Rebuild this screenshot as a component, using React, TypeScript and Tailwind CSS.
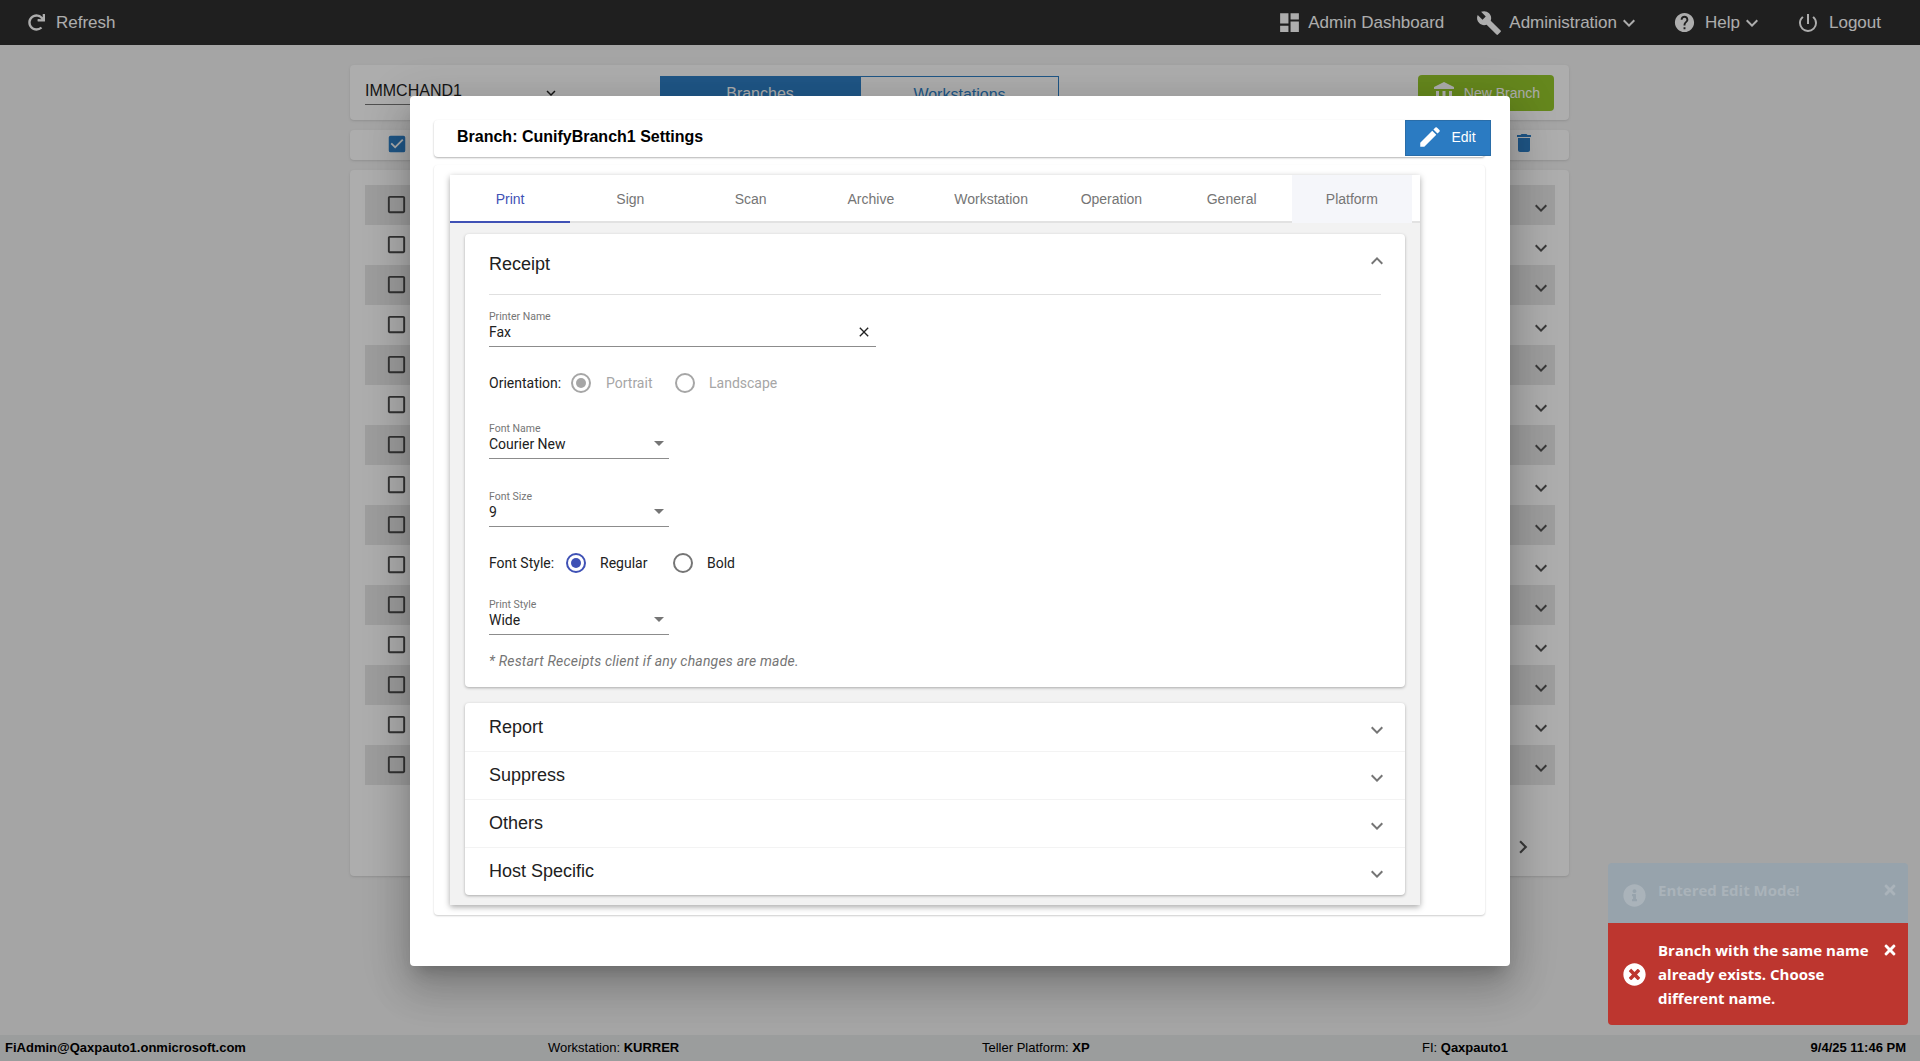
import { useState } from "react"
import {
  MdAccountBalance,
  MdBuild,
  MdCheckBox,
  MdCheckBoxOutlineBlank,
  MdClose,
  MdDashboard,
  MdDelete,
  MdEdit,
  MdExpandLess,
  MdExpandMore,
  MdHelp,
  MdPowerSettingsNew,
} from "react-icons/md"
import { FaInfoCircle, FaRedo, FaTimes, FaTimesCircle } from "react-icons/fa"

const tabs = ["Print", "Sign", "Scan", "Archive", "Workstation", "Operation", "General", "Platform"]
const sections = ["Report", "Suppress", "Others", "Host Specific"]
const rows = Array.from({ length: 15 }, (_, i) => i)

function NavItem({ icon, label, caret, className }: { icon: React.ReactNode; label: string; caret?: boolean; className?: string }) {
  return (
    <div className={`flex items-center ${className ?? ""}`}>
      {icon}
      <span className="text-[17px] leading-none">{label}</span>
      {caret && <MdExpandMore className="text-[24px]" />}
    </div>
  )
}

function SelectField({ label, value, className }: { label: string; value: string; className?: string }) {
  return (
    <div className={`w-[180px] border-b border-[#8c8c8c] h-[36px] relative ${className ?? ""}`}>
      <div className="text-[10.5px] leading-[12px] text-[#757575]">{label}</div>
      <div className="text-[14px] leading-[18px] text-[#212121]">{value}</div>
      <div className="absolute right-[5px] top-[18px] w-0 h-0 border-x-[5px] border-x-transparent border-t-[5px] border-t-[#757575]" />
    </div>
  )
}

function Radio({ checked, disabled }: { checked?: boolean; disabled?: boolean }) {
  const ring = disabled ? "border-[#a6a6a6]" : checked ? "border-[#3f51b5]" : "border-[#757575]"
  const dot = disabled ? "bg-[#a6a6a6]" : "bg-[#3f51b5]"
  return (
    <span className={`w-[20px] h-[20px] rounded-full border-2 flex items-center justify-center ${ring}`}>
      {checked && <span className={`w-[10px] h-[10px] rounded-full ${dot}`} />}
    </span>
  )
}

export default function App() {
  const [activeTab] = useState("Print")

  return (
    <div className="relative h-[1061px] overflow-hidden bg-[#f3f3f3] font-['Liberation_Sans',Arial,sans-serif]">
      {/* page behind the dialog */}
      <header className="h-[45px] bg-[#2e2e2e] text-white flex items-center justify-between pl-[28px] pr-[39px]">
        <NavItem icon={<FaRedo className="text-[17px] mr-[11px]" />} label="Refresh" />
        <div className="flex items-center">
          <NavItem icon={<MdDashboard className="text-[25px] mr-[6px]" />} label="Admin Dashboard" className="mr-[32px]" />
          <NavItem icon={<MdBuild className="text-[26px] mr-[7px]" />} label="Administration" caret className="mr-[32px]" />
          <NavItem icon={<MdHelp className="text-[23px] mr-[9px]" />} label="Help" caret className="mr-[32px]" />
          <NavItem icon={<MdPowerSettingsNew className="text-[24px] mr-[9px]" />} label="Logout" />
        </div>
      </header>

      <main className="w-[1219px] ml-[350px] pt-[20px]">
        <div className="h-[55px] bg-white rounded shadow-sm flex items-start px-[15px] pt-[10px] relative">
          <div className="w-[198px] h-[30px] border-b border-[#777] flex items-center justify-between pr-[3px] pt-[2px] text-[16px] text-[#222]">
            IMMCHAND1
            <MdExpandMore className="text-[18px] mt-[5px]" />
          </div>
          <div className="flex ml-[97px] mt-[1px] text-[16px] text-center">
            <div className="w-[200px] h-[36px] leading-[36px] bg-[#2e7fc6] text-white">Branches</div>
            <div className="w-[199px] h-[36px] leading-[36px] border border-[#2e7fc6] text-[#2e7fc6]">Workstations</div>
          </div>
          <div className="ml-auto w-[136px] h-[36px] rounded bg-[#96c82c] text-white text-[14px] flex items-center justify-center gap-[8px]">
            <MdAccountBalance className="text-[24px]" />
            New Branch
          </div>
        </div>

        <div className="h-[30px] mt-[10px] bg-white rounded shadow-sm flex items-center justify-between pl-[36px] pr-[33px]">
          <MdCheckBox className="text-[22px] text-[#2e7fc6] -mt-[2px]" />
          <MdDelete className="text-[24px] text-[#2e7fc6] -mt-[4px]" />
        </div>

        <div className="h-[706px] mt-[10px] bg-white rounded shadow-sm pt-[15px] px-[15px] relative">
          {rows.map((i) => (
            <div key={i} className={`h-[40px] w-[1190px] flex items-center justify-between pl-[20px] pr-[2px] text-[#555] ${i % 2 === 0 ? "bg-[#e8e8e8]" : ""}`}>
              <MdCheckBoxOutlineBlank className="text-[23px] text-[#4a4a4a] -mt-[2px]" />
              <MdExpandMore className="text-[24px] mt-[6px]" />
            </div>
          ))}
          <div className="flex justify-end pr-[18px] mt-[49px] text-[#555]">
            <MdExpandMore className="text-[26px] -rotate-90" />
          </div>
        </div>
      </main>

      <footer className="absolute bottom-0 inset-x-0 h-[26px] bg-[#e5e7e8] text-[13px] text-black flex items-center pl-[5px] pr-[14px]">
        <span className="w-[543px] font-bold">FiAdmin@Qaxpauto1.onmicrosoft.com</span>
        <span className="w-[434px]">Workstation: <b>KURRER</b></span>
        <span className="w-[440px]">Teller Platform: <b>XP</b></span>
        <span>FI: <b>Qaxpauto1</b></span>
        <b className="ml-auto">9/4/25 11:46 PM</b>
      </footer>

      {/* dialog */}
      <div className="absolute inset-0 bg-black/[.32]">
        <div className="w-[1100px] h-[870px] ml-[410px] mt-[96px] bg-white rounded-[4px] pt-[24px] pl-[24px] pr-[25px] shadow-[0_11px_15px_-7px_rgba(0,0,0,.2),0_24px_38px_3px_rgba(0,0,0,.14),0_9px_46px_8px_rgba(0,0,0,.12)]">
          <div className="h-[37px] flex items-start justify-between pl-[23px] rounded shadow-[0_1px_2px_rgba(0,0,0,.3)]">
            <span className="text-[16px] leading-[34px] font-bold text-black">Branch: CunifyBranch1 Settings</span>
            <button className="-mr-[6px] w-[86px] h-[36px] pb-[2px] pr-[3px] bg-[#2b7bc2] border border-[#2a6da8] text-white text-[14px] flex items-center justify-center gap-[8px]">
              <MdEdit className="text-[26px]" />
              Edit
            </button>
          </div>

          <div className="h-[750px] mt-[8px] pl-[16px] pt-[10px] rounded shadow-[0_1px_2px_rgba(0,0,0,.2)]">
            <div className="w-[970px] h-[730px] bg-[#f2f2f2] shadow-[0_2px_6px_rgba(0,0,0,.35)]">
              <div className="h-[48px] bg-white border-b-2 border-[#e2e2e2] flex">
                {tabs.map((t) => (
                  <div
                    key={t}
                    className={`w-[120.25px] h-[48px] flex items-center justify-center text-[14px] border-y-2 border-transparent ${
                      t === activeTab ? "text-[#3f51b5] border-b-[#3f51b5]" : "text-[#757575]"
                    } ${t === "Platform" ? "bg-[#f5f6fa]" : ""}`}
                  >
                    {t}
                  </div>
                ))}
              </div>

              <div className="ml-[15px] w-[940px] mt-[11px]">
                <section className="h-[453px] bg-white rounded shadow-[0_1px_3px_rgba(0,0,0,.3)] px-[24px] text-[#212121]">
                  <div className="h-[61px] border-b border-[#e0e0e0] flex items-center justify-between">
                    <span className="text-[18px]">Receipt</span>
                    <MdExpandLess className="text-[24px] text-[#757575] -mt-[6px] -mr-[8px]" />
                  </div>

                  <div className="font-['Roboto',sans-serif]">
                    <div className="w-[387px] h-[36px] mt-[16px] border-b border-[#8c8c8c] relative">
                      <div className="text-[10.5px] leading-[12px] text-[#757575]">Printer Name</div>
                      <div className="text-[14px] leading-[18px]">Fax</div>
                      <MdClose className="absolute right-[4px] top-[13px] text-[16px] text-[#222]" />
                    </div>

                    <div className="flex items-center h-[20px] mt-[26px] text-[14px]">
                      <span className="w-[82px]">Orientation:</span>
                      <Radio checked disabled />
                      <span className="ml-[15px] w-[69px] text-[#a6a6a6]">Portrait</span>
                      <Radio disabled />
                      <span className="ml-[14px] text-[#a6a6a6]">Landscape</span>
                    </div>

                    <SelectField label="Font Name" value="Courier New" className="mt-[30px]" />
                    <SelectField label="Font Size" value="9" className="mt-[32px]" />

                    <div className="flex items-center h-[20px] mt-[26px] text-[14px]">
                      <span className="w-[77px]">Font Style:</span>
                      <Radio checked />
                      <span className="ml-[14px] w-[73px]">Regular</span>
                      <Radio />
                      <span className="ml-[14px]">Bold</span>
                    </div>

                    <SelectField label="Print Style" value="Wide" className="mt-[26px]" />

                    <p className="mt-[18px] text-[14px] leading-[17px] italic text-[#757575] tracking-[.2px]">* Restart Receipts client if any changes are made.</p>
                  </div>
                </section>

                <section className="mt-[16px] bg-white rounded shadow-[0_1px_3px_rgba(0,0,0,.3)]">
                  {sections.map((s, i) => (
                    <div key={s} className={`h-[48px] pl-[24px] pr-[16px] flex items-center justify-between ${i > 0 ? "border-t border-[#f3f3f3]" : ""}`}>
                      <span className="text-[18px] text-[#212121]">{s}</span>
                      <MdExpandMore className={`text-[24px] text-[#757575] ${i > 0 ? "mt-[4px]" : "mt-[6px]"}`} />
                    </div>
                  ))}
                </section>
              </div>
            </div>
          </div>
        </div>
      </div>

      {/* toasts */}
      <div className="absolute right-[12px] top-[863px] w-[300px] font-['Open_Sans',sans-serif] font-bold text-[15px] leading-[24px]">
        <div className="h-[60px] rounded-t bg-[#97a3ac] text-[#aab3ba] flex items-start pt-[15px] pl-[45px] pr-[10px] relative">
          <FaInfoCircle className="absolute left-[15px] top-[21px] text-[23px]" />
          <span className="flex-1 ml-[5px]">Entered Edit Mode!</span>
          <FaTimes className="text-[16px] mt-[4px]" />
        </div>
        <div className="h-[102px] rounded-b bg-[#bd362f] text-white flex items-start pt-[15px] pl-[50px] pr-[10px] relative">
          <FaTimesCircle className="absolute left-[15px] top-[40px] text-[23px]" />
          <span className="flex-1">Branch with the same name already exists. Choose different name.</span>
          <FaTimes className="text-[16px] mt-[4px]" />
        </div>
      </div>
    </div>
  )
}
